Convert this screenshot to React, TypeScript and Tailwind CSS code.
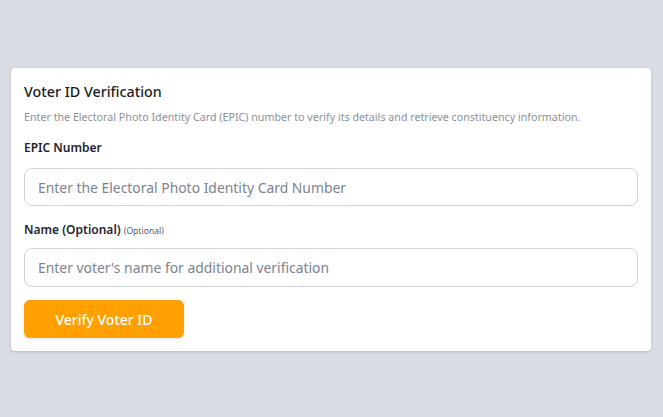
import React from "react";

export default function App() {
  return (
    <div className="min-h-[417px] w-full bg-[#d8dce3] pt-[68px] pl-[11px]" style={{ fontFamily: '"Noto Sans", sans-serif' }}>
      <div className="w-[640px] rounded-[4px] bg-white px-[13px] pt-[13px] pb-[13px] shadow-[0_1px_3px_rgba(0,0,0,0.15)]">
        <h2 className="pt-[1px] text-[14.3px] leading-[20px] font-medium text-[#1c1c1c]">Voter ID Verification</h2>
        <p className="mt-[7px] text-[10.7px] leading-[16px] text-[#8b909a]">
          Enter the Electoral Photo Identity Card (EPIC) number to verify its details and retrieve constituency information.
        </p>
        <label className="mt-[14px] block text-[12px] leading-[18px] font-semibold text-[#1f2430]">EPIC Number</label>
        <input
          className="mt-[11px] block h-[38px] w-full rounded-[8px] border border-[#cfd2d6] px-[13px] text-[13.9px] text-[#333] placeholder:text-[#7b8391] outline-none"
          placeholder="Enter the Electoral Photo Identity Card Number"
        />
        <label className="mt-[15px] block h-[18px] text-[12px] leading-[18px] font-semibold text-[#1f2430]">
          Name (Optional) <span className="text-[8.6px] leading-[0] font-normal text-[#555b66]">(Optional)</span>
        </label>
        <input
          className="mt-[9px] block h-[39px] w-full rounded-[8px] border border-[#cfd2d6] px-[13px] text-[13.9px] text-[#333] placeholder:text-[#7b8391] outline-none"
          placeholder="Enter voter's name for additional verification"
        />
        <button className="mt-[13px] block h-[38px] w-[160px] rounded-[6px] bg-[#ffa000] text-[14px] font-medium text-white shadow-[0_1px_3px_rgba(0,0,0,0.12)]">
          Verify Voter ID
        </button>
      </div>
    </div>
  );
}
